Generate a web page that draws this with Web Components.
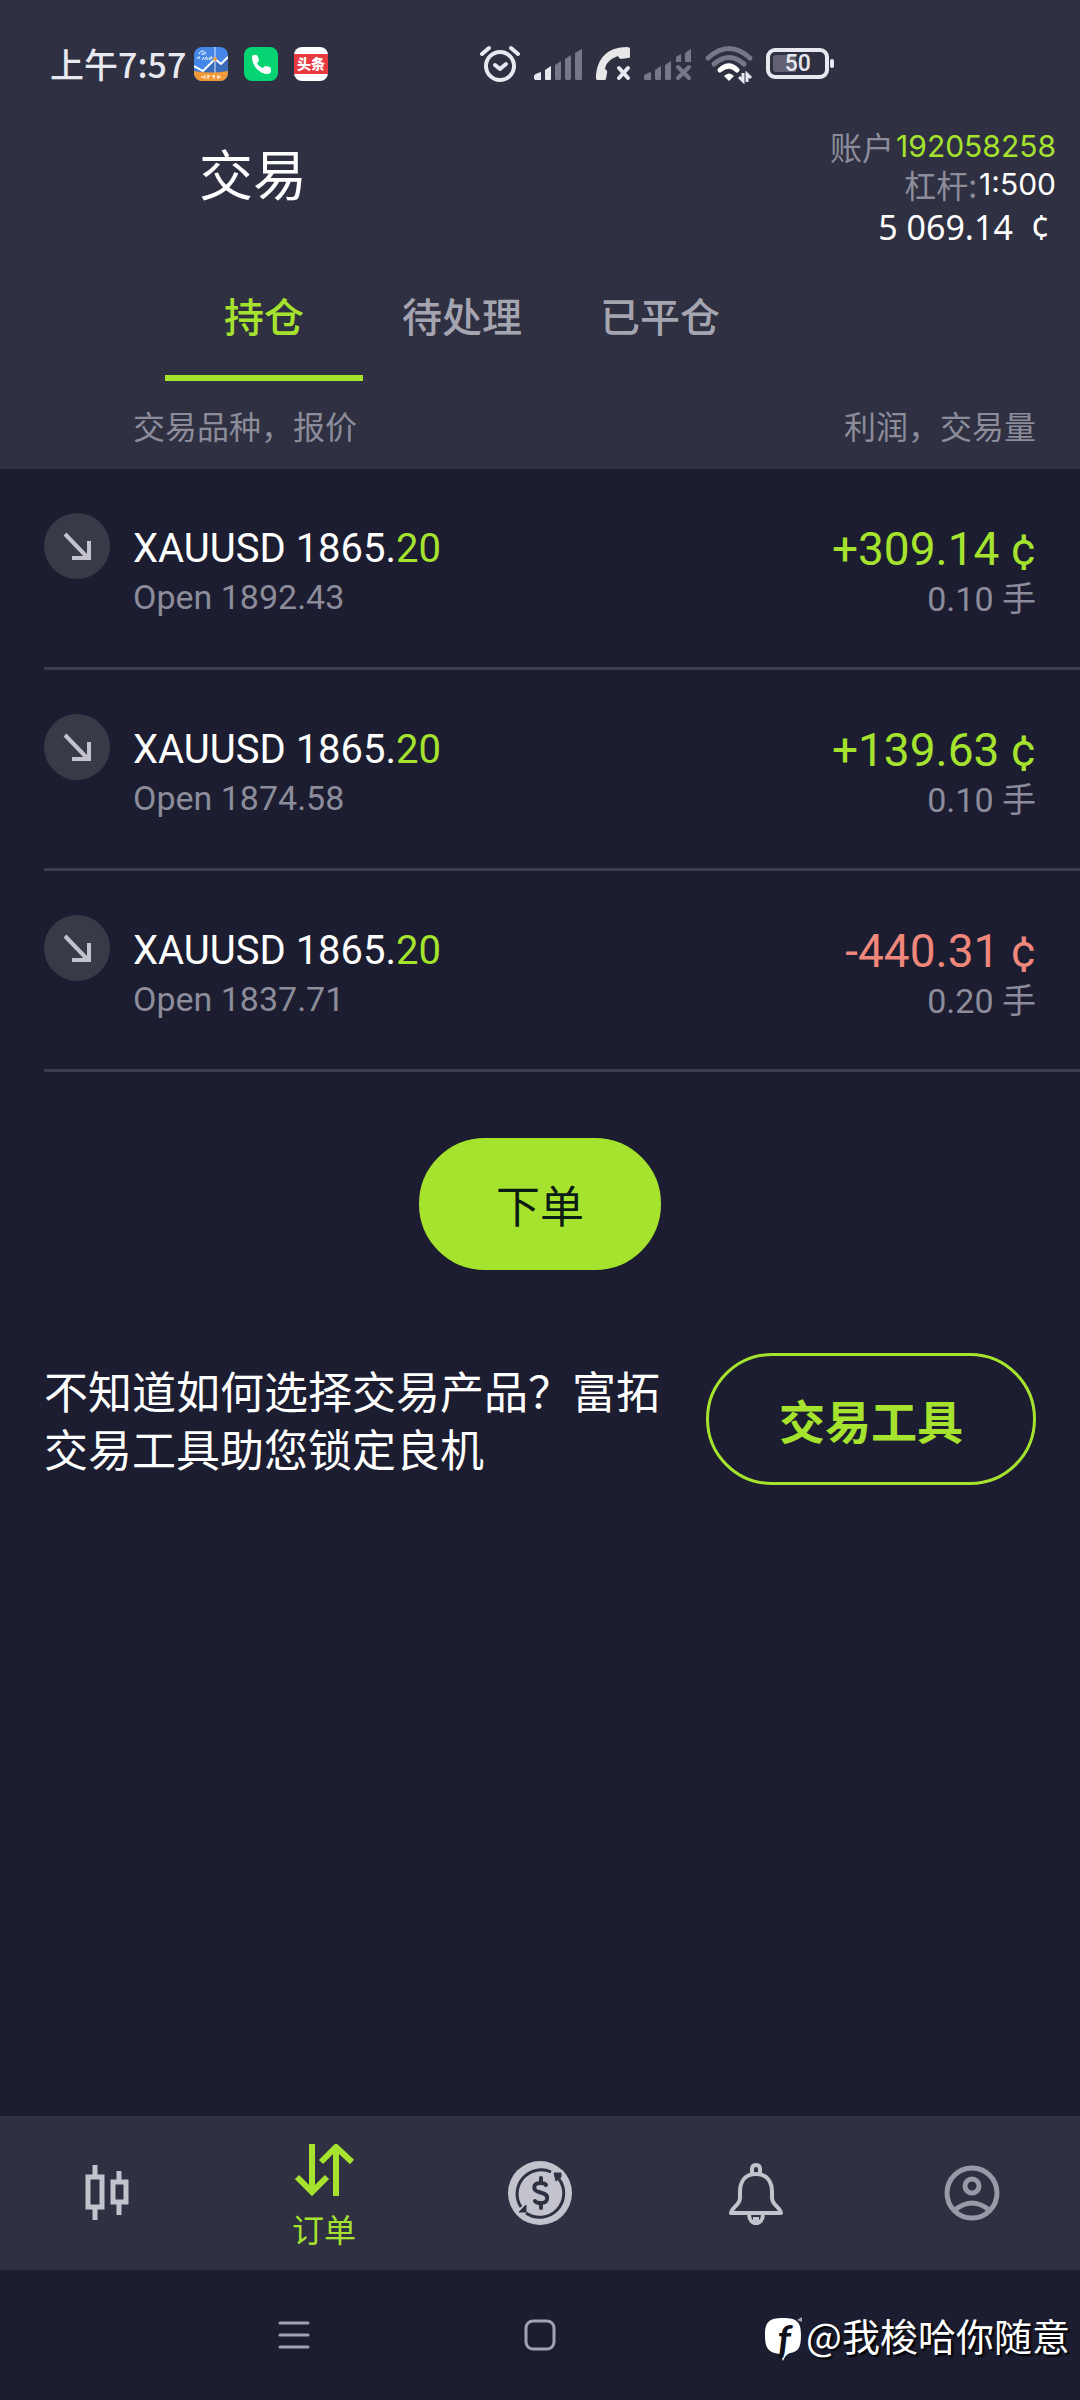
<!DOCTYPE html>
<html lang="zh-CN">
<head>
<meta charset="utf-8">
<meta name="viewport" content="width=device-width,initial-scale=1">
<title>交易</title>
<style>
:root{
  --bg:#1c1d30;
  --panel:#2f3041;
  --line:#3c3c50;
  --accent:#a5e32e;
  --loss:#f0877b;
  --muted:#8c8c9a;
  --icon:#c3c3cd;
}
html,body{margin:0;padding:0}
body{background:var(--bg);color:#fff;font:400 32px/1.2 Roboto,"Noto Sans CJK SC",sans-serif}
</style>
</head>
<body>
<trade-app></trade-app>

<script>
function define(name,html,setup){
  const template=document.createElement('template');
  template.innerHTML=html;
  customElements.define(name,class extends HTMLElement{

    constructor(){
      super();
      this.attachShadow({mode:'open'}).appendChild(template.content.cloneNode(true));
    }

    connectedCallback(){
      if(setup) setup.call(this,this.shadowRoot);
    }

  });
}

define('status-bar',`
<style>
:host{display:flex;align-items:center;height:127px;padding-left:50px;box-sizing:border-box;color:#e8e8f0}
time{font:500 34px/48px "Noto Sans CJK SC",sans-serif;margin-right:8px}
div{display:flex;align-items:center}
.apps{gap:16px}
.system{gap:14px;margin-left:152px}
svg{display:block;flex:none;overflow:visible}
text{font-family:"Noto Sans CJK SC",sans-serif}
.battery{display:grid;place-items:center start}
.battery>*{grid-area:1/1}
.battery span{width:63px;text-align:center;font:500 23px/32px Roboto,sans-serif}
</style>
<time>上午7:57</time>
<div class="apps">
  <svg width="34" height="34" viewBox="0 0 34 34">
    <clipPath id="app"><rect width="34" height="34" rx="8"/></clipPath>
    <g clip-path="url(#app)">
      <rect width="34" height="34" fill="#4487e8"/>
      <path d="M0 23L8 25 21 13 27 17 34 11V30H0z" fill="#3a6cb8"/>
      <path d="M0 19L9 24 21 12 27 17 34 10" fill="none" stroke="#fff" stroke-width="2"/>
      <path d="M21 0V27" stroke="#dce8fa" stroke-width="1"/>
      <path d="M3 12C4 9 7 9 5 12M8 13L10 10M11 13C11 9 14 9 13 13M18 10C14 10 14 14 17 12L18 10M5 7C6 3 11 3 12 7M8 8C8 5 10 5 10 8" fill="none" stroke="#fff" stroke-width="1"/>
      <circle cx="21" cy="12" r="2" fill="#f0a13c"/>
      <path d="M0 24Q17 27 34 24V34H0z" fill="#f29a38"/>
      <path d="M7 30H10M11 28V32M13 29H16M14 28V32M18 29H21M20 28V32M23 30H27M24 28V32" stroke="#fff" stroke-width="1"/>
    </g>
  </svg>
  <svg width="34" height="34" viewBox="0 0 34 34">
    <rect width="34" height="34" rx="8" fill="#06d472"/>
    <path d="M8 10Q8 8 10 8H12Q14 8 14 10L15 13Q15 15 13 16Q15 20 19 21Q20 19 22 19L26 20Q27 21 27 23V25Q26 27 23 27C14 26 8 18 8 10z" fill="#fff"/>
  </svg>
  <svg width="34" height="34" viewBox="0 0 34 34">
    <rect width="34" height="34" rx="8" fill="#fff"/>
    <rect y="7" width="34" height="20" fill="#e83a41"/>
    <text x="17" y="22" font-size="14" font-weight="900" fill="#fff" text-anchor="middle">头条</text>
  </svg>
</div>
<div class="system">
  <svg width="40" height="38" viewBox="0 0 40 38" fill="none" stroke="#e8e8f0" stroke-linecap="round">
    <circle cx="20" cy="21" r="14" stroke-width="4"/>
    <path d="M2 9L9 3M38 9L31 3" stroke-width="4"/>
    <path d="M15 20L20 24 26 19" stroke-width="4" stroke-linejoin="round"/>
  </svg>
  <svg width="48" height="32" viewBox="0 0 48 32">
    <g fill="#e8e8f0"><path d="M0 28Q0 26 7 24V32H1Q0 31 0 30z"/><path d="M11 22L17 18V31Q17 32 16 32H12Q11 32 11 31z"/></g>
    <g fill="#777789"><path d="M21 17L27 13V31L26 32H22L21 31z"/><path d="M31 11L37 7V31L36 32H32L31 31z"/><path d="M41 5L48 1V31L47 32H42L41 31z"/></g>
  </svg>
  <svg width="34" height="34" viewBox="0 0 34 34">
    <path d="M0 32C0 11 12 0 31 0Q34 0 34 2V10Q34 11 32 11L25 12Q23 12 22 9C14 12 10 16 9 22Q12 24 11 26L10 32Q10 33 8 33H2Q0 33 0 32z" fill="#e8e8e8"/>
    <path d="M23 21L32 31M32 21L23 31" stroke="#e8e8f0" stroke-width="4" stroke-linecap="round"/>
  </svg>
  <svg width="48" height="32" viewBox="0 0 48 32" fill="#777789">
    <path d="M0 28Q0 26 7 24V32H1Q0 31 0 30zM11 22L17 18V31L16 32H12L11 31zM21 17L27 13V31L26 32H22L21 31zM32 9L37 6V14H32zM41 5L47 1V14H41z"/>
    <path d="M34 19L45 30M45 19L34 30" stroke="#777789" stroke-width="4" stroke-linecap="round"/>
  </svg>
  <svg width="46" height="36" viewBox="0 0 46 36" fill="none" stroke-width="5">
    <path d="M2 12Q23-7 44 12" stroke="#777789" stroke-linecap="round"/>
    <path d="M8 18Q23 5 38 18" stroke="#777789" stroke-linecap="round"/>
    <path d="M14 24Q23 16 31 24" stroke="#fff" stroke-linecap="round"/>
    <path d="M18 30Q23 25 28 30L23 35z" fill="#fff"/>
    <path d="M37 27V35L33 31M41 36V28L45 32" stroke="#e8e8f0" stroke-width="3"/>
  </svg>
  <div class="battery">
    <svg width="69" height="32" viewBox="0 0 69 32">
      <rect x="2" y="2" width="59" height="27" rx="7" fill="none" stroke="#e8e8f0" stroke-width="4"/>
      <path d="M10 7H30V24H10Q7 24 7 21V10Q7 7 10 7z" fill="#626273"/>
      <rect x="64" y="11" width="4" height="9" rx="2" fill="#e8e8f0"/>
    </svg>
    <span>50</span>
  </div>
</div>`);

define('account-summary',`
<style>
:host{display:block;text-align:right;font:400 30px/38px Inter,"Noto Sans CJK SC",sans-serif}
p{margin:0;display:flex;justify-content:flex-end;align-items:center}
span{font:400 32px/38px "Noto Sans CJK SC",sans-serif;color:var(--muted)}
b{font-weight:400;margin-left:2px}
.id{color:var(--accent)}
.balance{font:400 34px/48px "Noto Sans",sans-serif;white-space:pre;padding-right:6px}
</style>
<p><span>账户</span><b class="id">192058258</b></p>
<p><span>杠杆:</span><b>1:500</b></p>
<p class="balance">5 069.14  ¢</p>`);

define('tab-bar',`
<style>
:host{display:flex;padding-left:165px}
button{width:18%;flex:0 1 198px;height:130px;box-sizing:border-box;margin:0;padding:4px 0 0;border:0;border-bottom:6px solid transparent;background:none;color:#a5a5b1;font:500 40px/48px "Noto Sans CJK SC",sans-serif;white-space:nowrap}
button[aria-selected=true]{color:var(--accent);border-color:var(--accent)}
</style>
<button role="tab" aria-selected="true">持仓</button>
<button role="tab" aria-selected="false">待处理</button>
<button role="tab" aria-selected="false">已平仓</button>`,
function(root){
  this.setAttribute('role','tablist');
  const tabs=[...root.querySelectorAll('button')];
  tabs.forEach(tab=>tab.onclick=_=>{
    tabs.forEach(t=>t.setAttribute('aria-selected',t===tab));
  });
});

define('position-table',`
<style>
:host{display:block}
table{width:100%;border-collapse:collapse;border-spacing:0}
th,td{padding:0;text-align:left;vertical-align:top;font-weight:400}
thead{background:var(--panel)}
th{height:88px;vertical-align:middle;color:var(--muted);font:400 32px/48px "Noto Sans CJK SC",sans-serif}
th:last-child,td:last-child{text-align:right;padding-right:44px}
tbody tr{height:201px;background:linear-gradient(var(--line),var(--line)) right bottom/calc(100% - 44px) 3px no-repeat}
.side{width:89px;padding:44px 0 0 44px}
td{padding:56px 0 0;font-size:40px;line-height:48px}
td div+div{font-size:34px;color:var(--muted)}
td:last-child div+div{line-height:52px}
.up{color:var(--accent)}
.down{color:var(--loss)}
td:last-child div:first-child{font-size:46px}
svg{display:block}
</style>
<table>
  <thead><tr><th></th><th>交易品种，报价</th><th>利润，交易量</th></tr></thead>
  <tbody></tbody>
</table>`,
function(root){
  const positions=[
    {open:'1892.43',profit:'+309.14',lots:'0.10'},
    {open:'1874.58',profit:'+139.63',lots:'0.10'},
    {open:'1837.71',profit:'-440.31',lots:'0.20'}
  ];
  root.querySelector('tbody').innerHTML=positions.map(p=>`<tr>
  <td class="side"><svg width="66" height="66" viewBox="0 0 66 66">
    <circle cx="33" cy="33" r="33" fill="#393a47"/>
    <path d="M21 21L44 45M28 45H45V28" fill="none" stroke="#c3c3cd" stroke-width="4"/>
  </svg></td>
  <td><div>XAUUSD 1865.<span class="up">20</span></div><div>Open ${p.open}</div></td>
  <td><div class="${p.profit[0]==='+'?'up':'down'}">${p.profit} ¢</div><div>${p.lots} 手</div></td>
</tr>`).join('');
});

define('pill-button',`
<style>
:host{display:block;flex:none}
button{display:block;height:132px;padding:0 74px;border:3px solid var(--accent);border-radius:66px;background:var(--accent);color:#0b1c14;font:400 44px/60px "Noto Sans CJK SC",sans-serif;white-space:nowrap}
:host([outline]) button{padding:0 70px;background:none;color:var(--accent);font-weight:700;font-size:46px}
</style>
<button><slot></slot></button>`);

define('tool-promo',`
<style>
:host{display:flex;justify-content:space-between;align-items:center;gap:24px;padding:0 44px}
p{margin:0;font:400 44px/58px "Noto Sans CJK SC",sans-serif}
</style>
<p>不知道如何选择交易产品？富拓<br>交易工具助您锁定良机</p>
<pill-button outline>交易工具</pill-button>`);

define('bottom-nav',`
<style>
:host{display:block;background:var(--panel)}
nav{display:grid;grid-template-columns:repeat(5,1fr);height:154px}
a{display:flex;flex-direction:column;align-items:center;justify-content:center;gap:8px;color:var(--icon);text-decoration:none;font:400 32px/40px "Noto Sans CJK SC",sans-serif}
a[aria-current]{color:var(--accent);gap:12px;padding-top:6px}
svg{display:block;fill:none;stroke:currentColor}
</style>
<nav>
  <a href="#quotes" aria-label="行情"><svg width="64" height="64" viewBox="0 0 64 64" stroke-width="5">
    <path d="M12 16H26V46H12zM37 21H50V41H37zM19 4V14M19 48V59M43 10V19M43 43V54"/>
  </svg></a>
  <a href="#orders" aria-current="page"><svg width="64" height="52" viewBox="0 0 64 52" stroke-width="6">
    <path d="M20 0V48M5 33L20 48 35 33M44 52V3M29 18L44 3 60 18"/>
  </svg>订单</a>
  <a href="#funds" aria-label="资金"><svg width="64" height="64" viewBox="0 0 64 64">
    <circle cx="32" cy="32" r="32" fill="currentColor" stroke="none"/>
    <g stroke="#2f3041" stroke-width="3">
      <path d="M43 11A24 24 0 0 0 13 46M51 18A24 24 0 0 1 18 52"/>
      <path d="M46 12H53V16L48 20zM11 51H18V44z" fill="#2f3041" stroke-width="1"/>
      <path d="M38 24Q37 22 32 22C24 22 25 30 31 31L34 32C42 34 40 42 33 42Q28 42 27 40M33 17V21M33 43V47" stroke-width="4" stroke-linecap="round"/>
    </g>
  </svg></a>
  <a href="#alerts" aria-label="通知"><svg width="60" height="64" viewBox="0 0 60 64" stroke-width="4" stroke-linejoin="round">
    <path d="M26 13V8Q26 4 30 4Q34 4 34 8V13"/>
    <path d="M30 13C18 13 14 22 14 31V37C14 44 6 46 5 52H55C54 46 46 44 46 37V31C46 22 42 13 30 13z"/>
    <path d="M23 54C24 65 36 65 37 54M27 58H33"/>
  </svg></a>
  <a href="#profile" aria-label="我的"><svg width="64" height="64" viewBox="0 0 64 64" stroke="#999aa7" stroke-width="5" style="color:#999aa7">
    <circle cx="32" cy="32" r="25"/>
    <circle cx="32" cy="25" r="7"/>
    <path d="M15 49Q32 35 49 49"/>
  </svg></a>
</nav>`);

define('system-nav',`
<style>
:host{display:grid;grid-template-columns:1fr auto 1fr;align-items:center;height:130px;box-sizing:border-box}
button{justify-self:center;display:block;margin:0;padding:0;border:0;background:none;color:#a2a2b1}
button:first-of-type{margin-left:64px}
svg{display:block}
.credit{justify-self:end;display:flex;align-items:center;gap:2px;padding-right:10px;font:400 38px/50px "Noto Sans CJK SC",sans-serif;text-shadow:2px 2px 2px #000}
.logo{display:grid;place-items:center;padding-top:8px}
.logo>*{grid-area:1/1}
.logo span{font:italic 700 40px/44px Lato,sans-serif;color:#10111c;text-shadow:none}
</style>
<button aria-label="菜单"><svg width="32" height="32" viewBox="0 0 32 32" stroke="currentColor" stroke-width="3" stroke-linecap="round">
  <path d="M2 4H30M2 16H30M2 28H30"/>
</svg></button>
<button aria-label="主屏幕"><svg width="32" height="32" viewBox="0 0 32 32" fill="none" stroke="currentColor" stroke-width="3">
  <rect x="2" y="2" width="28" height="28" rx="7"/>
</svg></button>
<div class="credit"><div class="logo"><svg width="40" height="44" viewBox="0 0 40 44">
  <path d="M19 1C33 1 37 5 37 18C37 31 34 35 26 36Q21 38 19 44Q17 40 17 37C4 36 1 31 1 18C1 5 5 1 19 1z" fill="#fff"/>
  <path d="M33 3L38 0V5z" fill="#a2a2b1"/>
</svg><span>f</span></div><span>@我梭哈你随意</span></div>`);

define('trade-app',`
<style>
:host{display:flex;flex-direction:column;min-height:100vh}
header{background:var(--panel)}
.top{display:flex;justify-content:space-between;align-items:flex-start;padding:0 24px 0 199px}
h1{margin:0;font:400 54px/92px "Noto Sans CJK SC",sans-serif}
main{flex:1}
.order{display:flex;justify-content:center;margin:66px 0 83px}
</style>
<header>
  <status-bar></status-bar>
  <div class="top"><h1>交易</h1><account-summary></account-summary></div>
  <tab-bar></tab-bar>
</header>
<main>
  <position-table></position-table>
  <div class="order"><pill-button>下单</pill-button></div>
  <tool-promo></tool-promo>
</main>
<bottom-nav></bottom-nav>
<system-nav></system-nav>`);
</script>
</body>
</html>
